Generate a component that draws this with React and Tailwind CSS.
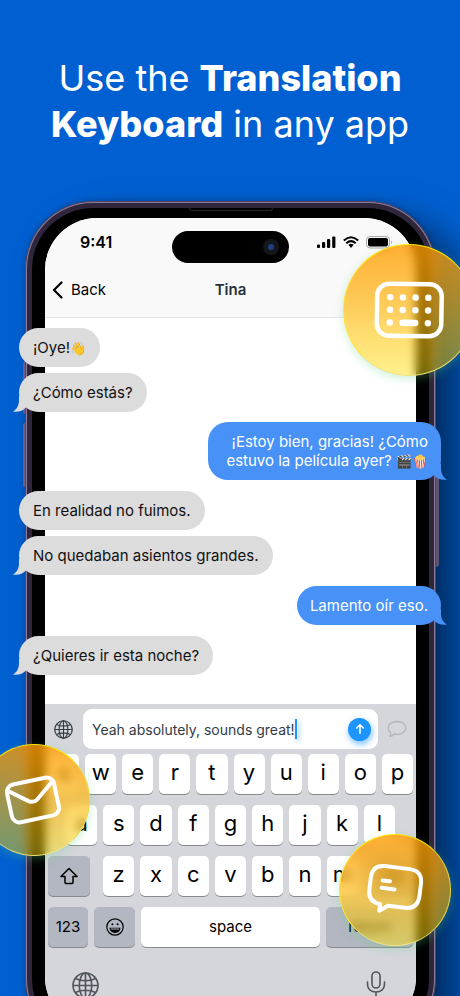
import React, { useState } from 'react';

const messages = [
    { id: 1, text: '¡Oye!', emoji: '👋', mine: false, tail: false, gap: '' },
    { id: 2, text: '¿Cómo estás?', mine: false, tail: true, gap: 'mt-1.5' },
    { id: 3, text: '¡Estoy bien, gracias! ¿Cómo estuvo la película ayer? ', emoji: '🎬🍿', mine: true, tail: true, gap: 'mt-2.5' },
    { id: 4, text: 'En realidad no fuimos.', mine: false, tail: false, gap: 'mt-[11px]' },
    { id: 5, text: 'No quedaban asientos grandes.', mine: false, tail: true, gap: 'mt-1.5' },
    { id: 6, text: 'Lamento oír eso.', mine: true, tail: true, gap: 'mt-[11px]' },
    { id: 7, text: '¿Quieres ir esta noche?', mine: false, tail: true, gap: 'mt-[11px]' },
];

const Globe = ({ className }) => (
    <svg viewBox="0 0 26 26" className={className} fill="none" stroke="currentColor" strokeWidth="1.6">
        <circle cx="13" cy="13" r="12" />
        <ellipse cx="13" cy="13" rx="6" ry="12" />
        <path d="M13 1v24M1 13h24M3.4 6.2c5 3 14.200 3 19.200 0M3.400 19.800c5-3 14.200-3 19.200 0" />
    </svg>
);

const Tail = ({ mine }) => (
    <svg
        viewBox="0 0 20 16"
        className={`absolute bottom-0 h-4 w-5 ${mine ? '-right-1.5 -scale-x-100 text-[#4791f7]' : '-left-1.5 text-[#dcdcdc]'}`}
        fill="currentColor"
    >
        <path d="M6 0V3C6 9 4.500 13 0 15.500C5 16.200 10 15 13 11.500L20 4V0Z" />
    </svg>
);

const Bubble = ({ message }) => {
    const { text, emoji, mine, tail, gap } = message;
    return (
        <li
            className={`relative rounded-[20px] py-2.5 text-[15px] leading-[19px] ${gap} ${
                mine
                    ? 'max-w-[233px] self-end bg-[#4791f7] px-[13px] text-right text-white'
                    : 'self-start bg-[#dcdcdc] px-3.5 text-[#111]'
            }`}
        >
            {tail && <Tail mine={mine} />}
            <span className="relative">
                {text}
                {emoji && <span className="text-[13px] leading-none">{emoji}</span>}
            </span>
        </li>
    );
};

const Key = ({ children, dark, className = '', label }) => (
    <button
        type="button"
        aria-label={label}
        className={`flex h-10 items-center justify-center rounded-[5px] text-black shadow-[0_1px_0_#898a8d] ${
            dark ? 'bg-[#b2b7c1]' : 'bg-white'
        } ${className}`}
    >
        {children}
    </button>
);

const Letters = ({ letters, className }) => (
    <div className={`grid gap-1.5 ${className}`}>
        {letters.split('').map((l) => (
            <Key key={l} className="pb-1 text-[22px]">{l}</Key>
        ))}
    </div>
);

const Keyboard = () => {
    const [text, setText] = useState('Yeah absolutely, sounds great!');

    return (
        <div className="flex h-[325px] flex-col rounded-b-[52px] bg-[#d4d6db] px-[3px]">
            <div className="flex items-center pt-[5px]">
                <button type="button" aria-label="Language" className="flex w-[35px] justify-center pr-1 text-[#333c46]">
                    <Globe className="h-[19px] w-[19px]" />
                </button>
                <div className="flex h-10 flex-1 items-center rounded-[9px] bg-white pr-[7px] pl-[9px]">
                    <input
                        aria-label="Message"
                        value={text}
                        onChange={(e) => setText(e.target.value)}
                        className="field-sizing-content min-w-0 bg-transparent text-[14px] text-[#333c46] outline-none"
                    />
                    <span className="h-5 w-0.5 shrink-0 bg-[#1c95ff] shadow-[2px_3px_5px_rgba(28,149,255,0.6)]"></span>
                    <button
                        type="button"
                        aria-label="Send"
                        className="ml-auto flex h-[23px] w-[23px] shrink-0 items-center justify-center rounded-full bg-[#1c95ff] text-white shadow-[1px_3px_6px_rgba(28,149,255,0.6)]"
                    >
                        <svg viewBox="0 0 12 12" className="h-3 w-3" fill="none" stroke="currentColor" strokeWidth="1.6" strokeLinecap="round" strokeLinejoin="round">
                            <path d="M6 10.200V2M2.800 5L6 1.800L9.200 5" />
                        </svg>
                    </button>
                </div>
                <button type="button" aria-label="Stickers" className="flex w-[35px] justify-center pl-0.5 text-[#b2b5bb]">
                    <svg viewBox="0 0 20 18" className="h-[18px] w-5" fill="none" stroke="currentColor" strokeWidth="1.300" strokeLinejoin="round">
                        <path d="M10 1.500C15 1.500 18.800 4.200 18.800 8C18.800 11.800 15 14.300 10 14.300C9 14.300 8.200 14.200 7.400 14C6.300 15.300 4.600 16.300 2.600 16.400C3.500 15.300 3.900 14 3.700 12.700C2.100 11.500 1.200 9.900 1.200 8C1.200 4.200 5 1.500 10 1.500Z" />
                    </svg>
                </button>
            </div>

            <div className="flex flex-col gap-[11px] pt-[5px]">
                <Letters letters="qwertyuiop" className="grid-cols-10" />
                <Letters letters="asdfghjkl" className="grid-cols-9 px-[18px]" />
                <div className="flex">
                    <Key dark label="Shift" className="w-[42px]">
                        <svg viewBox="0 0 20 18" className="h-[18px] w-5" fill="none" stroke="currentColor" strokeWidth="1.500" strokeLinejoin="round">
                            <path d="M10 1.500L18 9.500H14V15.500Q14 16.500 13 16.500H7Q6 16.500 6 15.500V9.500H2Z" />
                        </svg>
                    </Key>
                    <Letters letters="zxcvbnm" className="mx-[13px] flex-1 grid-cols-7" />
                    <Key dark label="Delete" className="w-[42px]">
                        <svg viewBox="0 0 22 16" className="h-4 w-[22px]" fill="none" stroke="currentColor" strokeWidth="1.400" strokeLinejoin="round" strokeLinecap="round">
                            <path d="M7 1H19Q21 1 21 3V13Q21 15 19 15H7L1 8ZM10 5L16 11M16 5L10 11" />
                        </svg>
                    </Key>
                </div>
                <div className="flex gap-1.5">
                    <Key dark className="w-10 text-[15px]">123</Key>
                    <Key dark label="Emoji" className="w-[41px]">
                        <svg viewBox="0 0 18 18" className="h-[18px] w-[18px]" fill="none" stroke="currentColor" strokeWidth="1.200">
                            <circle cx="9" cy="9" r="8.200" />
                            <path d="M3.600 9.800H14.400C14.400 13 12 15 9 15S3.600 13 3.600 9.800Z" fill="currentColor" stroke="none" />
                            <path d="M4.800 11H13.200" stroke="#b2b7c1" strokeWidth="1" />
                            <circle cx="6.400" cy="6.200" r="1" fill="currentColor" stroke="none" />
                            <circle cx="11.600" cy="6.200" r="1" fill="currentColor" stroke="none" />
                        </svg>
                    </Key>
                    <Key className="flex-1 text-[15px]">space</Key>
                    <Key dark className="w-[87px] text-[15px]">return</Key>
                </div>
            </div>

            <div className="flex justify-between px-6 pt-6 text-[#50555c]">
                <button type="button" aria-label="Next keyboard">
                    <Globe className="h-[27px] w-[27px]" />
                </button>
                <button type="button" aria-label="Dictate" className="pr-[3px]">
                    <svg viewBox="0 0 20 28" className="h-7 w-5" fill="none" stroke="currentColor" strokeWidth="1.600" strokeLinecap="round">
                        <rect x="6" y="1" width="8" height="16" rx="4" />
                        <path d="M1.500 11V13C1.500 18 5 21 10 21S18.500 18 18.500 13V11M10 21V26M6 26.500H14" />
                    </svg>
                </button>
            </div>
        </div>
    );
};

const Badge = ({ className, children }) => (
    <div
        aria-hidden="true"
        className={`absolute rounded-full border border-t-[#ffe600] border-r-[#e8d84a] border-b-[#efe37c] border-l-[#ffe23c] bg-linear-to-b from-[rgba(255,156,0,0.8)] to-[rgba(255,224,0,0.45)] shadow-[0_3px_10px_rgba(90,210,130,0.3)] backdrop-blur-[5px] ${className}`}
    >
        {children}
    </div>
);

const Header = () => (
    <div className="h-[100px] rounded-t-[52px] border-b border-[#e4e4e4] bg-[#f9f9f9]">
        <div className="grid grid-cols-[1fr_117px_1fr] items-center pt-[13px]">
            <span className="pb-2.5 pl-[35px] text-[16px] leading-[18px] font-semibold text-black">9:41</span>
            <div className="flex h-8 items-center justify-end rounded-full bg-black pr-2.5">
                <div className="flex h-4 w-4 items-center justify-center rounded-full bg-[#15161a]">
                    <span className="h-1.5 w-1.5 rounded-full bg-[#1d3f86]"></span>
                </div>
            </div>
            <svg viewBox="0 0 76 14" className="mb-2 ml-7 h-3.5 w-[76px]">
                <rect x="0" y="8.500" width="3" height="3.500" rx="1" />
                <rect x="5" y="6" width="3.200" height="6" rx="1" />
                <rect x="10" y="3" width="3.200" height="9" rx="1" />
                <rect x="15.200" y="0.500" width="3.200" height="11.500" rx="1" />
                <path d="M26.800 4.600Q34 -2 41.200 4.600M29.300 7.200Q34 3 38.700 7.200" fill="none" stroke="#000" strokeWidth="2" />
                <path d="M31.400 8.800Q34 6.800 36.600 8.800L34 12Z" />
                <rect x="49.500" y="0.500" width="23" height="11.500" rx="3.500" fill="none" stroke="#a8a8a8" />
                <rect x="51" y="2" width="20" height="8.500" rx="2" />
                <path d="M74 4.500Q76 6.200 74 8Z" fill="#a8a8a8" />
            </svg>
        </div>
        <div className="grid grid-cols-[1fr_auto_1fr] items-center pt-[17px] text-[15px] leading-5">
            <button type="button" className="flex items-center gap-2 pl-[7px] text-black">
                <svg viewBox="0 0 11 18" className="h-[18px] w-[11px]" fill="none" stroke="currentColor" strokeWidth="2.200" strokeLinecap="round" strokeLinejoin="round">
                    <path d="M9.500 1.500L2 9L9.500 16.500" />
                </svg>
                Back
            </button>
            <h2 className="font-semibold text-[#27313b]">Tina</h2>
        </div>
    </div>
);

const App = () => {
    return (
        <main className="relative h-screen overflow-hidden bg-[#0060d1] font-['Inter',sans-serif]">
            <h1 className="mx-auto max-w-[380px] pt-[55px] text-center text-[36px] leading-[46px] text-white">
                Use the <b className="font-extrabold">Translation Keyboard</b> in any app
            </h1>

            <div className="pt-[54px] pr-6 pl-[25px]">
                <div className="relative rounded-[68px] border border-[#4f4463] bg-[#8b7b98] p-px shadow-[26px_20px_36px_rgba(0,0,0,0.5),0_0_6px_rgba(0,0,0,0.25)]">
                    {/* side buttons */}
                    <span className="absolute top-40 -left-[3px] h-[52px] w-0.5 rounded-l bg-[#6b5f86]"></span>
                    <span className="absolute top-[221px] -left-[3px] h-16 w-0.5 rounded-l bg-[#6b5f86]"></span>
                    <span className="absolute top-[264px] -right-1 h-[101px] w-[3px] rounded-r bg-[#5d5470]"></span>

                    <div className="rounded-[66px] bg-[#30263c] p-[5px]">
                        <div className="relative rounded-[61px] bg-black px-[13px] pt-[10px] pb-[11px]">
                            <span className="absolute top-0 left-1/2 h-[3px] w-[84px] -translate-x-1/2 rounded-b border border-t-0 border-[#29262c]"></span>
                            <div className="rounded-[52px] bg-white">
                                <Header />
                                <ul className="-mr-[25px] -ml-[26px] flex flex-col pt-2.5 pb-[29px]">
                                    {messages.map((m) => (
                                        <Bubble key={m.id} message={m} />
                                    ))}
                                </ul>
                                <Keyboard />
                            </div>
                        </div>
                    </div>

                    <Badge className="top-[42px] -right-10 h-[132px] w-[132px]">
                        <svg viewBox="0 0 130 130" className="h-full w-full" fill="none" stroke="#fff" strokeLinecap="round">
                            <g transform="rotate(1 65 65)">
                                <rect x="33" y="39" width="64.500" height="52" rx="12" strokeWidth="4.500" />
                                <path d="M46 52.500h0M58.700 52.500h0M71.400 52.500h0M84.100 52.500h0M46 65.200h0M58.700 65.200h0M71.400 65.200h0M84.100 65.200h0M46 77.900h0M58.700 77.900H71.400M84.100 77.900h0" strokeWidth="6.500" />
                            </g>
                        </svg>
                    </Badge>
                    <Badge className="top-[542px] -left-12 h-28 w-28">
                        <svg viewBox="0 0 110 110" className="h-full w-full" fill="none" stroke="#fff" strokeWidth="4" strokeLinecap="round" strokeLinejoin="round">
                            <g transform="rotate(-12 55 55)">
                                <rect x="30" y="35.500" width="48" height="38.500" rx="7.500" />
                                <path d="M31 40.500L49.500 55Q54 58 58.500 55L77 40.500" />
                            </g>
                        </svg>
                    </Badge>
                    <Badge className="top-[632px] -right-4 h-28 w-28">
                        <svg viewBox="0 0 110 110" className="h-full w-full" fill="none" stroke="#fff" strokeWidth="4" strokeLinecap="round" strokeLinejoin="round">
                            <g transform="rotate(7 55 55)">
                                <path d="M42 32.500H67Q80 32.500 80 46V58Q80 71.500 67 71.500H50L42 77.500V71Q29.500 69.500 29.500 58V46Q29.500 32.500 42 32.500Z" />
                                <path d="M41.500 47H49M41.500 54.500H54.500" />
                            </g>
                        </svg>
                    </Badge>
                </div>
            </div>
        </main>
    );
};

export default App;
